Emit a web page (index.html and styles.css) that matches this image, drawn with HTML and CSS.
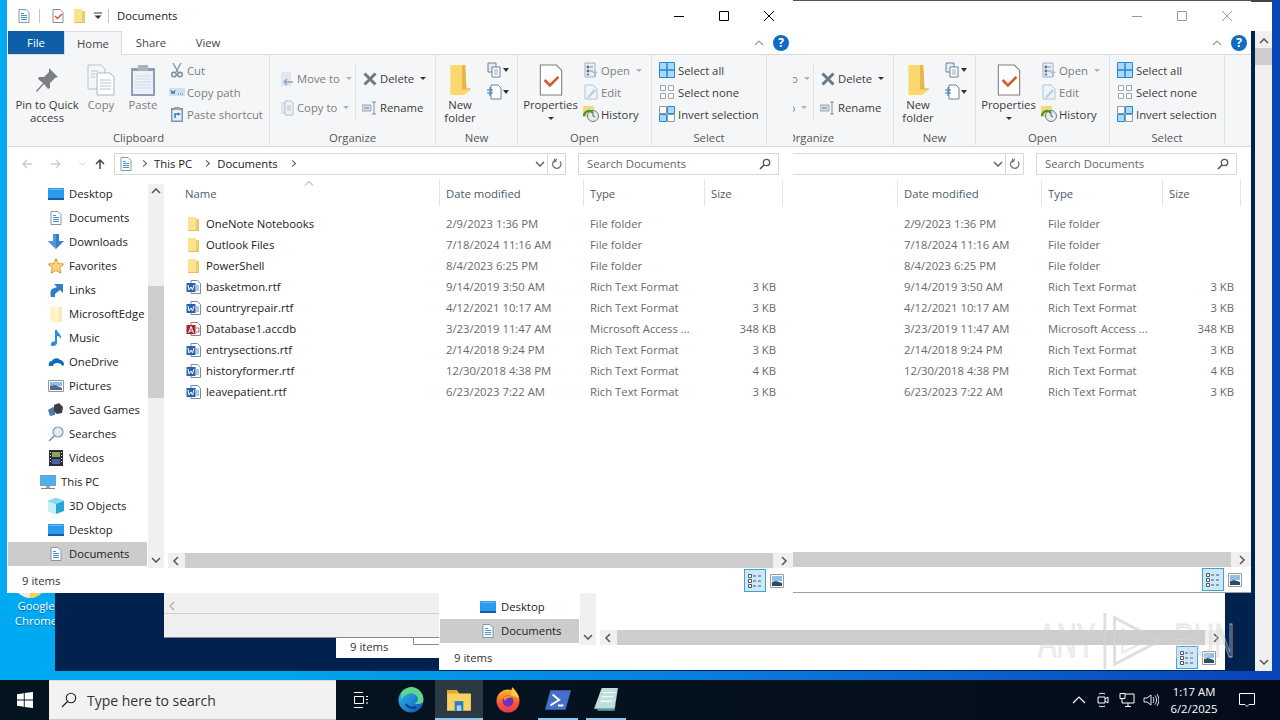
FILE: index.html
```html
<!DOCTYPE html>
<html lang="en">
<head>
    <meta charset="UTF-8">
    <title>Documents</title>
    <link rel="stylesheet" href="styles.css">
</head>
<body>
    <!-- Icon set, used by every window -->
    <svg class="defs" aria-hidden="true">
        <defs>
            <linearGradient id="g-edge" x1="0" y1="0" x2="1" y2="1"><stop offset="0" stop-color="#2fc4e8"/><stop offset=".6" stop-color="#1b7fd0"/><stop offset="1" stop-color="#0c4fa0"/></linearGradient>
            <linearGradient id="g-fox" x1="0" y1="0" x2="0" y2="1"><stop offset="0" stop-color="#ffbd2e"/><stop offset=".6" stop-color="#f9572f"/><stop offset="1" stop-color="#e8345a"/></linearGradient>
        </defs>
        <symbol id="i-doc" viewBox="0 0 16 16"><path d="M3 1.500h7l3 3v10H3z" fill="#fff" stroke="#8796a4"/><path d="M5 5.500h3M5 7.500h6M5 9.500h6M5 11.500h6" stroke="#3d9ad0"/></symbol>
        <symbol id="i-check" viewBox="0 0 16 16"><path d="M3 1.500h7l3 3v10H3z" fill="#fff" stroke="#8a8a8a"/><path d="M5 8l2.500 2.500L12 6" fill="none" stroke="#d9532c" stroke-width="1.500"/></symbol>
        <symbol id="i-folder" viewBox="0 0 16 16"><path d="M2 1h8v2h3v12H2z" fill="#fde38e"/><path d="M10 3h3v12h-3z" fill="#eacb73"/><path d="M2 14h11v1H2z" fill="#e2c068"/></symbol>
        <symbol id="i-folder-big" viewBox="0 0 24 30"><path d="M3 1h13l1 3 1 19h4v1l-6 5H3z" fill="#fbd76d"/><path d="M14 1h3l1 22h4v1H14z" fill="#e5b64c"/></symbol>
        <symbol id="i-pin" viewBox="0 0 32 32"><path d="M18 4l9 9-3 1-5 5 0 5-2 1-4-5-7 8-1-1 7-8-5-4 1-2 5 0 5-5z" fill="#7b7f84"/></symbol>
        <symbol id="i-copy" viewBox="0 0 32 32"><path d="M3 1h13l4 4v20H3z" fill="#f4f6f8" stroke="#b6c2cc"/><path d="M12 9h13l4 4v18H12z" fill="#fff" stroke="#a9b8c6"/><path d="M15 16h11M15 19h11M15 22h11M15 25h11M6 7h7M6 10h4M6 13h4" stroke="#b4c4d4"/></symbol>
        <symbol id="i-paste" viewBox="0 0 32 32"><path d="M4 4h24v28H4z" fill="#8aa0b8"/><path d="M6 7h20v23H6z" fill="#eef2f7"/><path d="M11 1h10v6H11z" fill="#a9b4bf"/><path d="M8 12h16M8 15h16M8 18h16M8 21h16M8 24h16" stroke="#cfd9e4"/></symbol>
        <symbol id="i-cut" viewBox="0 0 16 16"><path d="M4 1l5 9M12 1L7 10" stroke="#8f98a0" stroke-width="1.500"/><circle cx="5" cy="12.500" r="2.300" fill="none" stroke="#6f8ba6" stroke-width="1.400"/><circle cx="11" cy="12.500" r="2.300" fill="none" stroke="#6f8ba6" stroke-width="1.400"/></symbol>
        <symbol id="i-path" viewBox="0 0 16 16"><path d="M0 4h16v8H0z" fill="#cfe0f0"/><path d="M2 6l1 4 1-3 1 3 1-4" fill="none" stroke="#5a7896"/><path d="M9 10h1M11 10h1M13 10h1" stroke="#5a7896"/></symbol>
        <symbol id="i-shortcut" viewBox="0 0 16 16"><path d="M2 2h12v14H2z" fill="#7f96ad"/><path d="M3.500 4h9v10.500h-9z" fill="#e9eff5"/><path d="M5 1h6v3H5z" fill="#99a4ae"/><path d="M6 12l0-4 4 0-1 -1M10 8l-1 1" fill="none" stroke="#2a78c0" stroke-width="1.500"/></symbol>
        <symbol id="i-moveto" viewBox="0 0 16 16"><path d="M2 1h10v14H2z" fill="#dfe6ee"/><path d="M5 11h9M5 11l3-3M5 11l3 3" fill="none" stroke="#8fa8c0" stroke-width="1.500"/></symbol>
        <symbol id="i-copyto" viewBox="0 0 16 16"><path d="M2 2h8v12H2z" fill="#dfe6ee"/><path d="M6 1h6l2 2v12H6z" fill="#eef2f6" stroke="#b4c2d0"/><path d="M8 6h4M8 8h4M8 10h4" stroke="#b4c2d0"/></symbol>
        <symbol id="i-delete" viewBox="0 0 16 16"><path d="M2.500 2.500l11 11M13.500 2.500l-11 11" stroke="#6a7a8a" stroke-width="3"/></symbol>
        <symbol id="i-rename" viewBox="0 0 16 16"><path d="M0 5h9v6H0z" fill="#d4dbe3" stroke="#9aa6b2"/><path d="M2 8h5" stroke="#7a8794"/><path d="M12 2v12M10 2h4M10 14h4" stroke="#7f8d9b"/></symbol>
        <symbol id="i-newitem" viewBox="0 0 16 16"><path d="M2 1h8v9H2z" fill="#e3edf6" stroke="#6f8296"/><path d="M6 5h8v10H6z" fill="#fff" stroke="#6f8296"/><path d="M8 8h4M8 10h4M8 12h4" stroke="#9ab"/></symbol>
        <symbol id="i-easy" viewBox="0 0 16 16"><path d="M5 1h7l3 3v11H5z" fill="#fff" stroke="#6f8296"/><path d="M1 6h6M1 9h6M4 3v9" stroke="#2a78c0" stroke-width="1"/></symbol>
        <symbol id="i-props" viewBox="0 0 24 30"><path d="M2 1h15l5 5v23H2z" fill="#fff" stroke="#7e7e7e"/><path d="M6 15l5 5 8-8" fill="none" stroke="#d9582c" stroke-width="2.400"/></symbol>
        <symbol id="i-open" viewBox="0 0 16 16"><path d="M2 1h10v14H2z" fill="#e8eef4" stroke="#9fb0c0"/><path d="M4 4h2v2H4zM4 8h2v2H4zM4 12h2v1H4zM7 5h3M7 9h3" stroke="#7f95aa"/><path d="M12 8l3 3h-2v4h-2v-4H9z" fill="#a7c0d8"/></symbol>
        <symbol id="i-edit" viewBox="0 0 16 16"><path d="M2 1h8l4 4v10H2z" fill="#f2f5f8" stroke="#b4c2d0"/><path d="M4 13l7-8 2 2-7 7z" fill="#b4d0ea"/></symbol>
        <symbol id="i-history" viewBox="0 0 16 16"><path d="M0 0h11v11H0z" fill="#f5d777"/><circle cx="10" cy="10" r="5.500" fill="#e8eaec" stroke="#6e7a84"/><path d="M1 10a5 5 0 0 1 9-3" fill="none" stroke="#3c9a35" stroke-width="2.200"/><path d="M10 7v3l2 1" fill="none" stroke="#55606a"/></symbol>
        <symbol id="i-selall" viewBox="0 0 16 16"><path d="M.5.500h15v15H.5z" fill="#a9d8fa" stroke="#2a86d0"/><path d="M8 0v16M0 8h16" stroke="#2a86d0" stroke-width="1.500"/></symbol>
        <symbol id="i-selnone" viewBox="0 0 16 16"><path d="M1.500 1.500h5v5h-5zM9.500 1.500h5v5h-5zM1.500 9.500h5v5h-5zM9.500 9.500h5v5h-5z" fill="#fff" stroke="#9ca6ae"/></symbol>
        <symbol id="i-selinv" viewBox="0 0 16 16"><path d="M.5.500h7v7h-7z" fill="#fff" stroke="#8a9aa8"/><path d="M8.500.500h7v7h-7zM.5 8.500h7v7h-7z" fill="#a9d8fa" stroke="#2a86d0"/><path d="M8.500 8.500h7v7h-7z" fill="#fff" stroke="#8a9aa8"/></symbol>
        <symbol id="i-desktop" viewBox="0 0 16 16"><path d="M0 2h16v12H0z" fill="#2a9bec"/><path d="M0 12h16v2H0z" fill="#0d5fae"/><path d="M1 3h14v1H1z" fill="#65bdf6"/></symbol>
        <symbol id="i-downloads" viewBox="0 0 16 16"><path d="M5 0h6v7h5l-8 8-8-8h5z" fill="#3a7fc8"/><path d="M5 0h3v15L0 7h5z" fill="#4f95dc"/></symbol>
        <symbol id="i-star" viewBox="0 0 16 16"><path d="M8 .500l2.300 5 5.500.6-4.100 3.700 1.200 5.400L8 12.500l-4.900 2.700 1.200-5.400L.2 6.100l5.500-.6z" fill="#fbd27a" stroke="#d99a3c"/></symbol>
        <symbol id="i-links" viewBox="0 0 16 16"><path d="M6 2h9v9l-3-3-5 4v3H3c-1-3-1-6 1-8l5-2z" fill="#2f7fc4"/></symbol>
        <symbol id="i-pale" viewBox="0 0 16 16"><path d="M2 1h12v15H2z" fill="#fff3cd"/><path d="M11 1h3v15h-3z" fill="#fbe8b4"/></symbol>
        <symbol id="i-music" viewBox="0 0 16 16"><path d="M7 0h2c0 3 5 4 4 9-1-2-2-3-4-3v7c0 2-2 3-4 3s-3-1-2-2.500S6 11 7 11.500z" fill="#2c8ee0"/></symbol>
        <symbol id="i-onedrive" viewBox="0 0 16 16"><path d="M1 12c-1-3 1-5 3-5 1-3 6-4 8-1 2 0 4 2 4 4 0 1-1 2-2 2z" fill="#0f6cbd"/><path d="M5 12c0-2 2-3 4-3 2 0 5 1 5 3z" fill="#fff"/></symbol>
        <symbol id="i-pictures" viewBox="0 0 16 16"><path d="M.5 2.500h15v11H.5z" fill="#fff" stroke="#8c9aa8"/><path d="M2 4h12v4H2z" fill="#8cc0ea"/><path d="M2 8l5-1 7 3v2H2z" fill="#556a7c"/></symbol>
        <symbol id="i-games" viewBox="0 0 16 16"><path d="M0 8l5-3 3 2-1 6-5 1z" fill="#4a7ca8"/><path d="M6 3l5-2 4 4-1 6-5 1-3-3z" fill="#3b3f45"/></symbol>
        <symbol id="i-search" viewBox="0 0 16 16"><circle cx="10" cy="6" r="5" fill="#d8ecfa" stroke="#7e9ab2" stroke-width="1.200"/><path d="M6 10l-5 5" stroke="#8a8f95" stroke-width="1.600"/></symbol>
        <symbol id="i-videos" viewBox="0 0 16 16"><path d="M1 0h14v16H1z" fill="#2e2e33"/><path d="M4 2h8v5H4z" fill="#8fa35a"/><path d="M4 9h8v5H4z" fill="#4c63a8"/><path d="M2 2h1v1H2zM2 5h1v1H2zM2 8h1v1H2zM2 11h1v1H2zM13 2h1v1h-1zM13 5h1v1h-1zM13 8h1v1h-1zM13 11h1v1h-1z" fill="#ddd"/></symbol>
        <symbol id="i-pc" viewBox="0 0 16 16"><path d="M0 1h16v11H0z" fill="#8a99a8"/><path d="M1 2h14v9H1z" fill="#46b4f4"/><path d="M6 12h4v2H6z" fill="#9aa8b5"/><path d="M1 14h14v1H1z" fill="#7a8896"/></symbol>
        <symbol id="i-3d" viewBox="0 0 16 16"><path d="M8 0l8 3v10l-8 3-8-3V3z" fill="#27a7d8"/><path d="M0 3l8 3v10l-8-3z" fill="#c8eef8"/><path d="M8 0l8 3-8 3-8-3z" fill="#8cdcf0"/></symbol>
        <symbol id="i-word" viewBox="0 0 16 16"><path d="M5 1.500h6.500l3 3v10H5z" fill="#fff" stroke="#6d8fb4"/><path d="M10 7h3M10 9h3M10 11h3" stroke="#6d8fb4"/><path d="M.5 4h9v9h-9z" fill="#2d62ad"/><path d="M2 6l1 5 2-3 1.500 3L8 6" fill="none" stroke="#fff"/></symbol>
        <symbol id="i-access" viewBox="0 0 16 16"><path d="M5 1.500h6.500l3 3v10H5z" fill="#fff" stroke="#a57a7a"/><path d="M10 7h3v4h-3" fill="none" stroke="#a57a7a"/><path d="M.5 4h9v9h-9z" fill="#a4262c"/><path d="M2.500 12L5 5.500 7.500 12M3.500 10h3" fill="none" stroke="#fff"/></symbol>
        <symbol id="i-details" viewBox="0 0 16 16"><path d="M1.500 1.500h3v3h-3zM1.500 6.500h3v3h-3zM1.500 11.500h3v3h-3z" fill="#fff" stroke="#555"/><path d="M6 3h3M11 3h3M6 8h3M11 8h3M6 13h3M11 13h3" stroke="#555"/></symbol>
        <symbol id="i-large" viewBox="0 0 14 14"><path d="M.5.500h13v13H.5z" fill="#fff" stroke="#9a9a9a"/><path d="M2 2h10v5H2z" fill="#8cc0ea"/><path d="M2 8l4-1 6 2v3H2z" fill="#2f4a66"/></symbol>
    </svg>

    <div class="desktop">
        <svg class="chrome-icon" viewBox="0 0 32 32"><circle cx="16" cy="16" r="16" fill="#ecebe4"/><path d="M16 32A16 16 0 0 0 32 16H16z" fill="#f7cf45"/></svg>
        <div class="desk-label">Google<br>Chrome</div>

        <!-- Window furthest back, only its edge shows -->
        <div class="win-far">
            <div class="far-title"><svg class="far-x" viewBox="0 0 10 10"><path d="M-3 1l6 8M3 1l-6 8" stroke="#aaa"/></svg></div>
            <div class="far-scroll">
                <svg class="far-up" viewBox="0 0 10 6"><path d="M1 5l4-4 4 4" fill="none" stroke="#555" stroke-width="1.500"/></svg>
                <span class="far-thumb"></span>
                <svg class="far-down" viewBox="0 0 10 6"><path d="M1 1l4 4 4-4" fill="none" stroke="#555" stroke-width="1.500"/></svg>
            </div>
        </div>

        <div class="win-grey">
            <div class="grey-scroll"><svg class="arrow-s" viewBox="0 0 8 10"><path d="M6 1L2 5l4 4" fill="none" stroke="#b5b5b5" stroke-width="1.500"/></svg></div>
        </div>
        <div class="win-sliver"><span>9 items</span><i class="sliver-line"></i></div>

        <div class="win win-front" id="front">
            <div class="titlebar">
                <svg class="ico"><use href="#i-doc"/></svg>
                <i class="tsep"></i>
                <svg class="ico qat-check"><use href="#i-check"/></svg>
                <svg class="ico qat-folder"><use href="#i-folder"/></svg>
                <svg class="qat-drop" viewBox="0 0 8 8"><path d="M0 1h8" stroke="#333"/><path d="M.5 3.500h7L4 7z" fill="#333"/></svg>
                <i class="tsep tsep-last"></i>
                <span class="title-text">Documents</span>
                <div class="ctrls">
                    <svg class="ctrl" viewBox="0 0 12 12"><path d="M1 6.500h10" stroke="currentColor"/></svg>
                    <svg class="ctrl" viewBox="0 0 12 12"><path d="M1.500 1.500h9v9h-9z" fill="none" stroke="currentColor"/></svg>
                    <svg class="ctrl" viewBox="0 0 12 12"><path d="M1 1l10 10M11 1L1 11" stroke="currentColor"/></svg>
                </div>
            </div>

            <div class="tabs">
                <span class="tab tab-file">File</span>
                <span class="tab tab-home">Home</span>
                <span class="tab tab-share">Share</span>
                <span class="tab tab-view">View</span>
                <svg class="collapse" viewBox="0 0 10 6"><path d="M1 5l4-4 4 4" fill="none" stroke="#9a9a9a" stroke-width="1.200"/></svg>
                <span class="help">?</span>
            </div>

            <div class="ribbon">
                <section class="group g-clipboard">
                    <div class="group-body">
                        <div class="big b-pin"><svg class="ico-32"><use href="#i-pin"/></svg><span>Pin to Quick<br>access</span></div>
                        <div class="big b-copy off"><svg class="ico-32"><use href="#i-copy"/></svg><span>Copy</span></div>
                        <div class="big b-paste off"><svg class="ico-32"><use href="#i-paste"/></svg><span>Paste</span></div>
                        <div class="small-col c-clip off">
                            <div class="small"><svg class="ico"><use href="#i-cut"/></svg>Cut</div>
                            <div class="small"><svg class="ico"><use href="#i-path"/></svg>Copy path</div>
                            <div class="small"><svg class="ico"><use href="#i-shortcut"/></svg>Paste shortcut</div>
                        </div>
                    </div>
                    <div class="group-label">Clipboard</div>
                </section>

                <section class="group g-organize">
                    <div class="group-body">
                        <div class="org-col org-move off">
                            <div class="small"><svg class="ico"><use href="#i-moveto"/></svg>Move to<i class="caret caret-off"></i></div>
                            <div class="small"><svg class="ico"><use href="#i-copyto"/></svg>Copy to<i class="caret caret-off"></i></div>
                        </div>
                        <div class="org-col org-del">
                            <div class="small"><svg class="ico"><use href="#i-delete"/></svg>Delete<i class="caret"></i></div>
                            <div class="small"><svg class="ico"><use href="#i-rename"/></svg>Rename</div>
                        </div>
                    </div>
                    <div class="group-label">Organize</div>
                </section>

                <section class="group g-new">
                    <div class="group-body">
                        <div class="big b-new"><svg class="ico-32"><use href="#i-folder-big"/></svg><span>New<br>folder</span></div>
                        <div class="new-col">
                            <div class="small"><svg class="ico"><use href="#i-newitem"/></svg><i class="caret"></i></div>
                            <div class="small"><svg class="ico"><use href="#i-easy"/></svg><i class="caret"></i></div>
                        </div>
                    </div>
                    <div class="group-label">New</div>
                </section>

                <section class="group g-open">
                    <div class="group-body">
                        <div class="big b-props"><svg class="ico-32"><use href="#i-props"/></svg><span>Properties</span><i class="caret caret-down"></i></div>
                        <div class="small-col c-open">
                            <div class="small off"><svg class="ico"><use href="#i-open"/></svg>Open<i class="caret caret-off"></i></div>
                            <div class="small off"><svg class="ico"><use href="#i-edit"/></svg>Edit</div>
                            <div class="small"><svg class="ico"><use href="#i-history"/></svg>History</div>
                        </div>
                    </div>
                    <div class="group-label">Open</div>
                </section>

                <section class="group g-select">
                    <div class="group-body">
                        <div class="small-col c-select">
                            <div class="small"><svg class="ico"><use href="#i-selall"/></svg>Select all</div>
                            <div class="small"><svg class="ico"><use href="#i-selnone"/></svg>Select none</div>
                            <div class="small"><svg class="ico"><use href="#i-selinv"/></svg>Invert selection</div>
                        </div>
                    </div>
                    <div class="group-label">Select</div>
                </section>
            </div>

            <div class="addressbar">
                <div class="nav-btns">
                    <svg class="nav-arrow" viewBox="0 0 12 12"><path d="M11 6H2M6 2L2 6l4 4" fill="none" stroke="#cdcdcd" stroke-width="1.300"/></svg>
                    <svg class="nav-arrow" viewBox="0 0 12 12"><path d="M1 6h9M6 2l4 4-4 4" fill="none" stroke="#cdcdcd" stroke-width="1.300"/></svg>
                    <svg class="nav-drop" viewBox="0 0 8 6"><path d="M1 1l3 3 3-3" fill="none" stroke="#d5d5d5"/></svg>
                    <svg class="nav-arrow" viewBox="0 0 12 12"><path d="M6 11V2M2 6l4-4 4 4" fill="none" stroke="#444" stroke-width="1.500"/></svg>
                </div>
                <div class="address">
                    <svg class="ico addr-ico"><use href="#i-doc"/></svg>
                    <i class="chev"></i><span class="crumb">This PC</span>
                    <i class="chev"></i><span class="crumb">Documents</span>
                    <i class="chev"></i>
                    <svg class="addr-drop" viewBox="0 0 10 6"><path d="M1 1l4 4 4-4" fill="none" stroke="#666" stroke-width="1.500"/></svg>
                    <div class="refresh"><svg viewBox="0 0 12 12"><path d="M6 1.500h-1M9 3.500A4.200 4.200 0 1 1 4 2.300" fill="none" stroke="#777" stroke-width="1.300"/><path d="M3 0v5l3-2z" fill="#777"/></svg></div>
                </div>
                <div class="search">
                    <span>Search Documents</span>
                    <svg viewBox="0 0 12 12"><circle cx="7.500" cy="4.500" r="3.200" fill="none" stroke="#555" stroke-width="1.300"/><path d="M5 7L1 11" stroke="#555" stroke-width="1.700"/></svg>
                </div>
            </div>

            <div class="main">
                <div class="navpane" data-nav></div>
                <div class="vscroll">
                    <svg class="arrow-v" viewBox="0 0 10 6"><path d="M1 5l4-4 4 4" fill="none" stroke="#555" stroke-width="1.500"/></svg>
                    <div class="vtrack"><div class="vthumb"></div></div>
                    <svg class="arrow-v" viewBox="0 0 10 6"><path d="M1 1l4 4 4-4" fill="none" stroke="#555" stroke-width="1.500"/></svg>
                </div>
                <div class="content">
                    <div class="columns">
                        <span class="col-name">Name<svg class="sort" viewBox="0 0 10 5"><path d="M1 4.500l4-4 4 4" fill="none" stroke="#9a9a9a"/></svg></span>
                        <span>Date modified</span>
                        <span>Type</span>
                        <span>Size</span>
                    </div>
                    <div class="files" data-files></div>
                    <div class="hscroll">
                        <span class="h-arrow"><svg class="arrow-s" viewBox="0 0 8 10"><path d="M6 1L2 5l4 4" fill="none" stroke="#555" stroke-width="1.500"/></svg></span>
                        <span class="h-thumb"></span>
                        <span class="h-arrow h-right"><svg class="arrow-s" viewBox="0 0 8 10"><path d="M2 1l4 4-4 4" fill="none" stroke="#555" stroke-width="1.500"/></svg></span>
                    </div>
                </div>
            </div>

            <div class="status">
                <span class="status-text">9 items</span>
                <span class="view-btn view-on"><svg class="ico"><use href="#i-details"/></svg></span>
                <svg class="view-large"><use href="#i-large"/></svg>
            </div>
        </div>

        <!-- ANY.RUN mark over the corner -->
        <div class="watermark">
            <span class="wm-word">ANY</span>
            <svg class="wm-play" viewBox="0 0 70 64"><path d="M6 3v58M16 8v48l46-24z" fill="none" stroke="#d2d2d2" stroke-opacity=".7" stroke-width="3"/><path d="M24 20v24l24-12z" fill="none" stroke="#d2d2d2" stroke-opacity=".5" stroke-width="2"/></svg>
            <span class="wm-word">RUN</span>
        </div>
    </div>

    <div class="taskbar">
        <div class="start"><svg viewBox="0 0 16 16"><path d="M0 2.200l6.800-1v6.300H0zM7.700 1.100L16 0v7.500H7.700zM0 8.400h6.800v6.400L0 13.800zM7.700 8.400H16V16l-8.300-1.100z" fill="#fff"/></svg></div>
        <div class="tb-search">
            <svg viewBox="0 0 16 16"><circle cx="10" cy="6" r="4.700" fill="none" stroke="#222" stroke-width="1.100"/><path d="M6.500 9.500L1 15" stroke="#222" stroke-width="1.200"/></svg>
            <span>Type here to search</span>
        </div>
        <div class="task t-view"><svg viewBox="0 0 16 16" class="t-ico16"><path d="M2 .5h9M2 15.500h9M2.500 4.500h9v7h-9zM14 4.500h2M14 7.500h2M14 11h2" fill="none" stroke="#fff"/></svg></div>
        <div class="task t-edge"><svg viewBox="0 0 26 26"><circle cx="13" cy="13" r="12.500" fill="url(#g-edge)"/><path d="M3 6a12 12 0 0 1 22 9c-2 2-6 3-9 1 3 0 4-2 4-4 0-4-6-7-10-5-3 1-5 3-7 5z" fill="#5fd68a"/><path d="M8 17c1 3 6 5 10 3" fill="none" stroke="#0a3f86" stroke-width="2"/></svg></div>
        <div class="task t-explorer is-active"><svg viewBox="0 0 24 24"><path d="M1 3h9l2 3h11v16H1z" fill="#f9d35f"/><path d="M1 3h9l2 3H1z" fill="#e5a92f"/><path d="M8 13h8v9H8z" fill="#2d7fc4"/><path d="M10 17h4v5h-4z" fill="#a9d6f5"/></svg></div>
        <div class="task t-fox"><svg viewBox="0 0 26 26"><circle cx="13" cy="14" r="11.500" fill="url(#g-fox)"/><path d="M17 0c3 3 6 6 7 11l-8-3z" fill="#ffcb37"/><circle cx="13" cy="14" r="5.500" fill="#6f2fc0"/><path d="M8 11c3-3 8-3 9 0-3-1-6 0-7 3z" fill="#ff8a2a"/></svg></div>
        <div class="task t-ps is-open"><svg viewBox="0 0 24 20"><path d="M5 1h19l-5 18H0z" fill="#4470c8"/><path d="M7 5l6 5-8 5M12 15h5" fill="none" stroke="#fff" stroke-width="1.800"/></svg></div>
        <div class="task t-note is-open"><svg viewBox="0 0 24 24"><path d="M8 1h15l-3 19H1z" fill="#bfe0d8"/><path d="M5 22h15l3-21-3 19H3z" fill="#5f9aa8"/><path d="M9 5h11M8 9h11M7 13h11" stroke="#fff"/></svg></div>

        <div class="tray">
            <svg class="tray-ico" viewBox="0 0 16 16"><path d="M2 11l6-6 6 6" fill="none" stroke="#fff" stroke-width="1.200"/></svg>
            <svg class="tray-ico" viewBox="0 0 16 16"><path d="M3 5h7v6H3zM10 7l3-2v6l-3-2M4 2c2-1 4-1 6 0M4 14c2 1 4 1 6 0" fill="none" stroke="#fff"/></svg>
            <svg class="tray-ico" viewBox="0 0 16 16"><path d="M3 2h12v9H3zM9 11v3M6 14.500h6" fill="none" stroke="#fff"/><path d="M1 1.500h5v5H1z" fill="#111" stroke="#fff"/></svg>
            <svg class="tray-ico" viewBox="0 0 16 16"><path d="M1 6h3l4-3v10l-4-3H1zM10 5c1 2 1 4 0 6M12 3.500c2 3 2 6 0 9M14 2c2.500 4 2.500 8 0 12" fill="none" stroke="#fff" stroke-width=".9"/></svg>
            <div class="clock">1:17 AM<br>6/2/2025</div>
            <div class="notify"><svg viewBox="0 0 16 16"><path d="M.5 1.500h15v11H10l-2 2-2-2H.5z" fill="none" stroke="#fff"/></svg></div>
        </div>
    </div>

    <script src="script.js"></script>
</body>
</html>
```

FILE: styles.css
```css
* {
    box-sizing: border-box;
}
body {
    margin: 0;
    width: 1280px;
    height: 720px;
    overflow: hidden;
    display: flex;
    flex-direction: column;
    font-family: "Open Sans", "Noto Sans", sans-serif;
    font-size: 11.3px;
    color: #1f1f1f;
}
.defs {
    position: absolute;
    width: 0;
    height: 0;
}
.ico {
    width: 16px;
    height: 16px;
    flex: none;
}
.ico-32 {
    width: 32px;
    height: 32px;
    flex: none;
}

/* desktop */
.desktop {
    position: relative;
    height: 680px;
    overflow: hidden;
    background: linear-gradient(90deg, #00aaf3 0%, #00a5ef 22%, #0a78d8 60%, #0a44b4 100%);
}
.chrome-icon {
    position: absolute;
    left: 14px;
    top: 566px;
    width: 32px;
    height: 32px;
}
.desk-label {
    position: absolute;
    left: 5px;
    top: 598px;
    width: 62px;
    text-align: center;
    color: #fff;
    line-height: 15px;
    text-shadow: 0 1px 1px rgba(0, 0, 0, .4);
}
.win-far {
    position: absolute;
    left: 55px;
    top: 0;
    width: 1217px;
    height: 671px;
    background: #01214f;
    display: flex;
    flex-wrap: wrap;
    justify-content: flex-end;
    align-content: flex-start;
}
.far-title {
    width: 100%;
    height: 31px;
    background: #fff;
    border-top: 2px solid #444;
    display: flex;
    justify-content: flex-end;
    padding: 9px 19px 0 0;
}
.far-x {
    width: 10px;
    height: 10px;
}
.far-scroll {
    width: 17px;
    height: 640px;
    background: #f0f0f0;
    display: flex;
    flex-direction: column;
    align-items: center;
    padding-top: 7px;
}
.far-up {
    width: 10px;
    height: 6px;
    margin-bottom: 4px;
}
.far-thumb {
    width: 100%;
    height: 17px;
    background: #cdcdcd;
}
.far-down {
    width: 10px;
    height: 6px;
    margin-top: auto;
    margin-bottom: 6px;
}
.win-grey {
    position: absolute;
    left: 164px;
    top: 593px;
    width: 276px;
    height: 45px;
    background: #f0f0f0;
    border-bottom: 1px solid #8a8a8a;
    padding-top: 5px;
}
.grey-scroll {
    height: 16px;
    border-bottom: 1px solid #d0d0d0;
    padding-left: 4px;
    display: flex;
    align-items: center;
}
.win-sliver {
    position: absolute;
    left: 336px;
    top: 638px;
    width: 104px;
    height: 20px;
    background: #fff;
    padding: 1px 0 0 14px;
    color: #333;
}
.sliver-line {
    position: absolute;
    left: 77px;
    top: 0;
    width: 27px;
    height: 7px;
    border-left: 1px solid #8a8a8a;
    border-bottom: 1px solid #8a8a8a;
}

/* explorer window */
.win {
    position: absolute;
    isolation: isolate;
    width: 786px;
    height: 593px;
    background: #fff;
    border-left: 1px solid #fff;
    display: flex;
    flex-direction: column;
    overflow: hidden;
}
.win-front {
    left: 7px;
    top: 0;
}
.win-back {
    left: 465px;
    top: 0;
    border-bottom: 1px solid #a0a0a0;
}
.win-mid {
    left: 439px;
    top: 77px;
}

/* parts of the stacked windows that lie under the front ones */
.win-back .titlebar > *:not(.ctrls),
.win-back .tab,
.win-back .g-clipboard,
.win-back .crumb,
.win-back .addr-ico,
.win-back .chev,
.win-back .nav-btns,
.win-back .navpane,
.win-back .col-name,
.win-back .file-name,
.win-back .status-text,
.win-mid .titlebar,
.win-mid .tabs,
.win-mid .ribbon,
.win-mid .addressbar,
.win-mid .columns,
.win-mid .files,
.win-mid .nav-item:nth-child(-n+14) {
    visibility: hidden;
}
.win-back .titlebar {
    box-shadow: inset 0 1px 0 #555;
}

.titlebar {
    height: 31px;
    flex: none;
    display: flex;
    align-items: center;
    padding-left: 8px;
}
.tsep {
    width: 1px;
    height: 14px;
    background: #c4c4c4;
    margin: 0 9px 0 7px;
}
.tsep-last {
    margin: 0 8px 0 6px;
}
.qat-check {
    margin-left: 1px;
}
.qat-folder {
    margin-left: 6px;
}
.qat-drop {
    width: 8px;
    height: 8px;
    margin: 1px 0 0 6px;
}
.title-text {
    color: #222;
    margin-top: -1px;
}
.ctrls {
    margin-left: auto;
    display: flex;
    color: #000;
    padding-right: 18px;
}
.win-back .ctrls {
    color: #999;
}
.ctrl {
    width: 12px;
    height: 12px;
    margin-left: 33px;
}
.tabs {
    flex: none;
    display: flex;
    align-items: center;
    position: relative;
    z-index: 1;
    margin-bottom: -1px;
    height: 24px;
}
.tab {
    height: 24px;
    line-height: 23px;
    text-align: center;
    color: #444;
}
.tab-file {
    width: 56px;
    height: 23px;
    align-self: flex-start;
    background: #0f5fa8;
    color: #fff;
}
.tab-home {
    width: 58px;
    background: #f5f6f7;
    border: 1px solid #dadbdc;
    border-bottom: none;
}
.tab-share {
    width: 58px;
}
.tab-view {
    width: 56px;
}
.collapse {
    width: 10px;
    height: 6px;
    margin-left: auto;
}
.help {
    width: 16px;
    height: 16px;
    border-radius: 50%;
    background: #0f6cc4;
    color: #fff;
    font-weight: 700;
    font-size: 12px;
    line-height: 16px;
    text-align: center;
    margin: 0 4px 0 9px;
}

/* ribbon */
.ribbon {
    height: 93px;
    flex: none;
    display: flex;
    background: #f5f6f7;
    border-top: 1px solid #dadbdc;
    border-bottom: 1px solid #dadbdc;
    color: #3b3b3b;
    line-height: 13px;
}
.group {
    display: flex;
    flex-direction: column;
    padding-top: 1px;
    border-right: 1px solid #e1e2e3;
    margin-bottom: 1px;
}
.group-body {
    height: 74px;
    display: flex;
}
.group-label {
    text-align: center;
    color: #555;
    height: 16px;
    padding-top: 1px;
    line-height: 15px;
}
.g-clipboard {
    width: 262px;
}
.g-organize {
    width: 166px;
}
.g-new {
    width: 82px;
}
.g-open {
    width: 134px;
}
.g-select {
    width: 115px;
}
.big {
    display: flex;
    flex-direction: column;
    align-items: center;
    text-align: center;
    padding-top: 8px;
    flex: none;
    white-space: nowrap;
}
.big span {
    margin-top: 2px;
}
.off {
    color: #7d7d7d;
}
.b-pin {
    width: 62px;
    margin-left: 8px;
}
.b-copy {
    width: 40px;
    margin-left: 3px;
}
.b-paste {
    width: 40px;
    margin-left: 2px;
}
.small-col {
    padding-top: 3px;
}
.c-clip {
    margin-left: 6px;
}
.small {
    height: 22px;
    display: flex;
    align-items: center;
    gap: 2px;
    white-space: nowrap;
}
.caret {
    width: 0;
    height: 0;
    border-left: 3px solid transparent;
    border-right: 3px solid transparent;
    border-top: 3px solid #333;
    margin-left: 4px;
}
.caret-off {
    border-top-color: #b0b0b0;
}
.caret-down {
    margin: 6px 0 0;
}
.org-col .small {
    height: 29px;
}
.org-col {
    padding-top: 8px;
}
.org-move {
    margin-left: 9px;
    width: 77px;
    position: relative;
}
.org-move::after {
    content: "";
    position: absolute;
    right: 0;
    top: 8px;
    height: 56px;
    width: 1px;
    background: #e1e2e3;
}
.org-del {
    margin-left: 6px;
}
.b-new {
    width: 48px;
}
.new-col {
    padding-top: 3px;
    margin-left: 2px;
}
.new-col .small {
    gap: 0;
}
.new-col .caret {
    margin-left: 1px;
    border-top-width: 4px;
}
.b-props {
    width: 53px;
    margin-left: 6px;
}
.c-open {
    margin-left: 6px;
}
.c-select {
    margin-left: 7px;
}
.c-select .small {
    gap: 3px;
}

/* address bar */
.addressbar {
    height: 33px;
    flex: none;
    display: flex;
    align-items: center;
}
.nav-btns {
    width: 106px;
    flex: none;
    display: flex;
    align-items: center;
    padding-left: 13px;
}
.nav-arrow {
    width: 12px;
    height: 12px;
    margin-right: 17px;
}
.nav-arrow:last-child {
    margin: 0;
}
.nav-drop {
    width: 8px;
    height: 6px;
    margin: 0 8px 0 -1px;
}
.address {
    width: 452px;
    height: 22px;
    flex: none;
    border: 1px solid #d9d9d9;
    display: flex;
    align-items: center;
    color: #222;
}
.addr-ico {
    margin-left: 3px;
    margin-right: 3px;
}
.crumb {
    margin-right: 8px;
}
.chev {
    width: 5px;
    height: 5px;
    border-top: 1.500px solid #555;
    border-right: 1.500px solid #555;
    transform: rotate(45deg);
    margin: 0 8px 0 4px;
}
.addr-drop {
    width: 10px;
    height: 6px;
    margin-left: auto;
    margin-right: 2px;
}
.refresh {
    width: 18px;
    height: 20px;
    border-left: 1px solid #d9d9d9;
    display: flex;
    align-items: center;
    justify-content: center;
}
.refresh svg {
    width: 12px;
    height: 12px;
}
.search {
    width: 201px;
    height: 22px;
    flex: none;
    margin-left: 12px;
    border: 1px solid #d9d9d9;
    display: flex;
    align-items: center;
    justify-content: space-between;
    padding: 0 7px 0 8px;
    color: #666;
}
.search svg {
    width: 12px;
    height: 12px;
}

/* panes */
.main {
    flex: 1;
    min-height: 0;
    display: flex;
}
.navpane {
    width: 140px;
    flex: none;
    padding: 2px 1px 0 0;
    overflow: hidden;
}
.nav-item {
    height: 24px;
    display: flex;
    align-items: center;
    gap: 5px;
    padding-left: 40px;
    white-space: nowrap;
    color: #222;
}
.nav-item span {
    margin-bottom: 2px;
}
.nav-item.top {
    padding-left: 32px;
}
.nav-item.selected {
    background: #cccccc;
}
.vscroll {
    width: 16px;
    flex: none;
    background: #f0f0f0;
    margin-top: 4px;
    display: flex;
    flex-direction: column;
    align-items: center;
    padding: 4px 0 5px;
}
.arrow-v {
    width: 10px;
    height: 6px;
    flex: none;
}
.vtrack {
    flex: 1;
    width: 100%;
    padding-top: 92px;
}
.vthumb {
    height: 112px;
    background: #cdcdcd;
}
.content {
    flex: 1;
    min-width: 0;
    display: flex;
    flex-direction: column;
}
.columns,
.file-row {
    display: grid;
    grid-template-columns: 275px 144px 121px 79px;
}
.columns {
    height: 28px;
    flex: none;
    color: #4c5a6a;
    position: relative;
}
.columns span {
    padding: 6px 0 0 6px;
    border-left: 1px solid #e5e5e5;
    margin-bottom: 2px;
}
.columns .col-name {
    padding-left: 21px;
    border-left: none;
}
.columns span:last-child {
    border-right: 1px solid #e5e5e5;
}
.sort {
    position: absolute;
    left: 140px;
    top: 1px;
    width: 10px;
    height: 5px;
}
.files {
    flex: 1;
    padding-top: 5px;
}
.file-row {
    height: 21px;
    line-height: 21px;
    color: #6a6a6a;
}
.file-row > span {
    padding-left: 7px;
    white-space: nowrap;
}
.file-row .file-name {
    display: flex;
    align-items: center;
    gap: 4px;
    padding-left: 22px;
    color: #222;
}
.file-row .file-size {
    text-align: right;
    padding-right: 7px;
}
.hscroll {
    height: 15px;
    flex: none;
    display: flex;
    margin-left: 4px;
    background: #f0f0f0;
}
.h-arrow {
    width: 17px;
    flex: none;
    display: flex;
    align-items: center;
    padding-left: 4px;
}
.h-right {
    width: 20px;
    padding-left: 7px;
}
.arrow-s {
    width: 8px;
    height: 10px;
}
.h-thumb {
    flex: 1;
    background: #cdcdcd;
}
.status {
    height: 25px;
    flex: none;
    display: flex;
    align-items: center;
    padding: 0 9px 0 14px;
    color: #333;
}
.view-btn {
    width: 22px;
    height: 23px;
    margin-left: auto;
    display: flex;
    align-items: center;
    justify-content: center;
}
.view-on {
    background: #cce8ff;
    border: 1px solid #3fa6c9;
}
.view-large {
    width: 14px;
    height: 14px;
    margin-left: 4px;
}

/* watermark */
.watermark {
    position: absolute;
    left: 1038px;
    top: 611px;
    width: 194px;
    height: 60px;
    display: flex;
    align-items: center;
}
.wm-word {
    font-family: "Liberation Sans", sans-serif;
    font-size: 48px;
    line-height: 60px;
    width: 60px;
    color: rgba(200, 200, 200, .3);
    -webkit-text-stroke: 1px rgba(220, 220, 220, .7);
    transform: scaleX(.58);
    transform-origin: left center;
}
.wm-play {
    width: 70px;
    height: 62px;
    margin: 0 6px 0 0;
    flex: none;
}

/* taskbar */
.taskbar {
    height: 40px;
    flex: none;
    display: flex;
    background: linear-gradient(90deg, #03141e, #04121f 50%, #050b1a);
    color: #fff;
}
.start {
    width: 49px;
    display: flex;
    align-items: center;
    justify-content: center;
}
.start svg {
    width: 16px;
    height: 16px;
}
.tb-search {
    width: 287px;
    background: #f2f2f2;
    border-bottom: 1px solid #c8c8c8;
    border-top: 1px solid #dcdcdc;
    display: flex;
    align-items: center;
    padding-left: 12px;
    gap: 10px;
    color: #333;
    font-size: 14px;
}
.tb-search svg {
    width: 16px;
    height: 16px;
}
.task {
    width: 48px;
    display: flex;
    align-items: center;
    justify-content: center;
    position: relative;
}
.task svg {
    width: 26px;
    height: 26px;
}
.task .t-ico16 {
    width: 16px;
    height: 16px;
}
.t-view {
    margin-right: 3px;
}
.t-fox {
    margin-left: 1px;
}
.t-ps {
    margin-left: 2px;
}
.is-active {
    background: #2c3a46;
}
.is-active::after,
.is-open::after {
    content: "";
    position: absolute;
    bottom: 0;
    height: 2px;
    background: #8cc8f0;
}
.is-active::after {
    left: 0;
    right: 0;
}
.is-open::after {
    left: 4px;
    right: 4px;
}
.tray {
    margin-left: auto;
    display: flex;
    align-items: center;
    padding-right: 10px;
}
.tray-ico {
    width: 16px;
    height: 16px;
    margin: 0 4px;
}
.clock {
    width: 60px;
    margin-left: 1px;
    text-align: center;
    line-height: 17px;
}
.notify {
    width: 46px;
    display: flex;
    justify-content: center;
}
.notify svg {
    width: 16px;
    height: 16px;
}
```

FILE: script.js
```js
// Sidebar entries
const navItems = [
    { icon: 'i-desktop', text: 'Desktop' },
    { icon: 'i-doc', text: 'Documents' },
    { icon: 'i-downloads', text: 'Downloads' },
    { icon: 'i-star', text: 'Favorites' },
    { icon: 'i-links', text: 'Links' },
    { icon: 'i-pale', text: 'MicrosoftEdge' },
    { icon: 'i-music', text: 'Music' },
    { icon: 'i-onedrive', text: 'OneDrive' },
    { icon: 'i-pictures', text: 'Pictures' },
    { icon: 'i-games', text: 'Saved Games' },
    { icon: 'i-search', text: 'Searches' },
    { icon: 'i-videos', text: 'Videos' },
    { icon: 'i-pc', text: 'This PC', top: true },
    { icon: 'i-3d', text: '3D Objects' },
    { icon: 'i-desktop', text: 'Desktop' },
    { icon: 'i-doc', text: 'Documents', selected: true }
];

// Folder contents
const files = [
    ['i-folder', 'OneNote Notebooks', '2/9/2023 1:36 PM', 'File folder', ''],
    ['i-folder', 'Outlook Files', '7/18/2024 11:16 AM', 'File folder', ''],
    ['i-folder', 'PowerShell', '8/4/2023 6:25 PM', 'File folder', ''],
    ['i-word', 'basketmon.rtf', '9/14/2019 3:50 AM', 'Rich Text Format', '3 KB'],
    ['i-word', 'countryrepair.rtf', '4/12/2021 10:17 AM', 'Rich Text Format', '3 KB'],
    ['i-access', 'Database1.accdb', '3/23/2019 11:47 AM', 'Microsoft Access ...', '348 KB'],
    ['i-word', 'entrysections.rtf', '2/14/2018 9:24 PM', 'Rich Text Format', '3 KB'],
    ['i-word', 'historyformer.rtf', '12/30/2018 4:38 PM', 'Rich Text Format', '4 KB'],
    ['i-word', 'leavepatient.rtf', '6/23/2023 7:22 AM', 'Rich Text Format', '3 KB']
];

const front = document.getElementById('front');

front.querySelector('[data-nav]').innerHTML = navItems.map(item => `
    <div class="nav-item${item.top ? ' top' : ''}${item.selected ? ' selected' : ''}">
        <svg class="ico"><use href="#${item.icon}"/></svg><span>${item.text}</span>
    </div>`).join('');

front.querySelector('[data-files]').innerHTML = files.map(f => `
    <div class="file-row">
        <span class="file-name"><svg class="ico"><use href="#${f[0]}"/></svg>${f[1]}</span>
        <span>${f[2]}</span>
        <span>${f[3]}</span>
        <span class="file-size">${f[4]}</span>
    </div>`).join('');

// The same folder is open in the windows stacked behind
['win win-mid', 'win win-back'].forEach(name => {
    const copy = front.cloneNode(true);
    copy.removeAttribute('id');
    copy.className = name;
    front.parentNode.insertBefore(copy, front);
});
```
